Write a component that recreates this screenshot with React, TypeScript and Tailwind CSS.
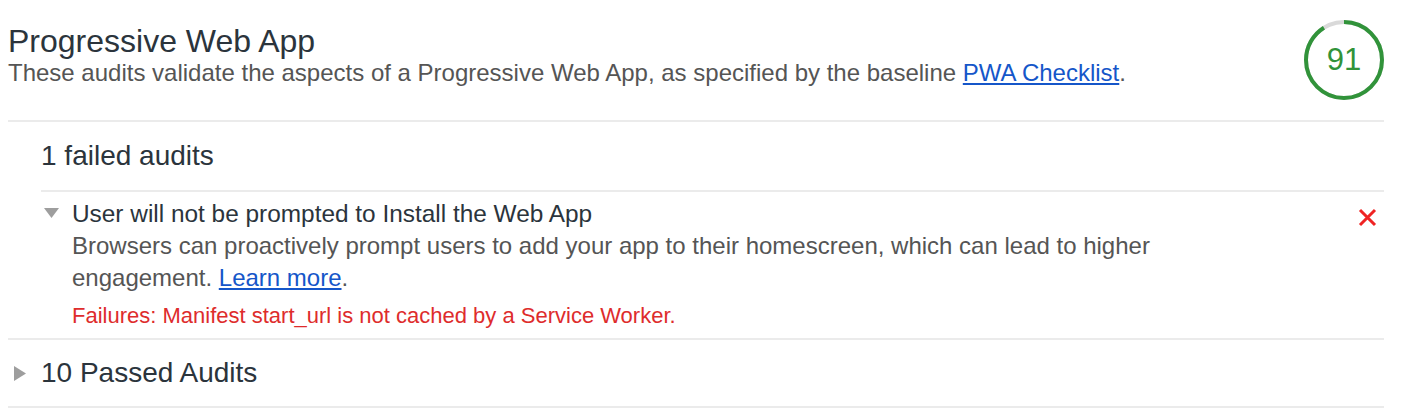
import React from 'react';

const ScoreGauge: React.FC<{ score: number }> = ({ score }) => {
  const r = 38;
  const c = 2 * Math.PI * r;
  return (
    <div className="relative w-20 h-20 shrink-0">
      <svg width="80" height="80" viewBox="0 0 80 80" className="-rotate-90">
        <circle cx="40" cy="40" r={r} fill="none" stroke="#d9d9d9" strokeWidth="4" />
        <circle
          cx="40"
          cy="40"
          r={r}
          fill="none"
          stroke="#31933a"
          strokeWidth="4"
          strokeDasharray={`${(c * score) / 100} ${c}`}
        />
      </svg>
      <div className="absolute inset-0 flex items-center justify-center text-[31px] text-[#31933a]">
        {score}
      </div>
    </div>
  );
};

const Caret: React.FC<{ open?: boolean }> = ({ open }) =>
  open ? (
    <svg width="15" height="10" viewBox="0 0 15 10" className="shrink-0">
      <polygon points="0,0 15,0 7.5,10" fill="#9e9e9e" />
    </svg>
  ) : (
    <svg width="12" height="15" viewBox="0 0 12 15" className="shrink-0">
      <polygon points="0,0 12,7.5 0,15" fill="#9e9e9e" />
    </svg>
  );

const FailIcon = () => (
  <svg width="19" height="19" viewBox="0 0 19 19" className="shrink-0">
    <path d="M2 2 L17 17 M17 2 L2 17" stroke="#ef2323" strokeWidth="3" />
  </svg>
);

export default function App() {
  return (
    <div className="w-[1416px] h-[410px] bg-white font-['Liberation_Sans',Arial,sans-serif] text-[#2b343c] overflow-hidden">
      <div className="pl-2 pr-8">
        <div className="flex justify-between items-start pt-5 pb-5 border-b-2 border-[#ebebeb]">
          <div>
            <h1 className="text-[32px] leading-9 mt-[3px]">Progressive Web App</h1>
            <p className="text-[24px] leading-7 text-[#555]">
              These audits validate the aspects of a Progressive Web App, as specified by the baseline{' '}
              <a href="#" className="text-[#1556c9] underline">PWA Checklist</a>.
            </p>
          </div>
          <ScoreGauge score={91} />
        </div>

        <div className="pl-[33px] border-b-2 border-[#ebebeb]">
          <div className="h-[68px] flex items-center text-[28px] leading-7">1 failed audits</div>
          <div className="border-t-2 border-[#ebebeb] flex items-start pt-[6px] pb-[10px]">
            <div className="w-[31px] pt-[10px] pl-[3px]">
              <Caret open />
            </div>
            <div className="flex-1">
              <div className="text-[24.4px] leading-8">User will not be prompted to Install the Web App</div>
              <p className="text-[24px] leading-8 text-[#555] max-w-[1120px]">
                Browsers can proactively prompt users to add your app to their homescreen, which can lead to higher
                engagement.{' '}
                <a href="#" className="text-[#1556c9] underline">Learn more</a>.
              </p>
              <p className="text-[22px] leading-6 mt-[10px] text-[#de2c2c]">
                Failures: Manifest start_url is not cached by a Service Worker.
              </p>
            </div>
            <div className="pt-[10px] pr-[7px]">
              <FailIcon />
            </div>
          </div>
        </div>

        <div className="h-[68px] flex items-center border-b-2 border-[#ebebeb]">
          <div className="w-[33px] pl-[6px] flex items-center">
            <Caret />
          </div>
          <span className="text-[28px] leading-7">10 Passed Audits</span>
        </div>
      </div>
    </div>
  );
}
